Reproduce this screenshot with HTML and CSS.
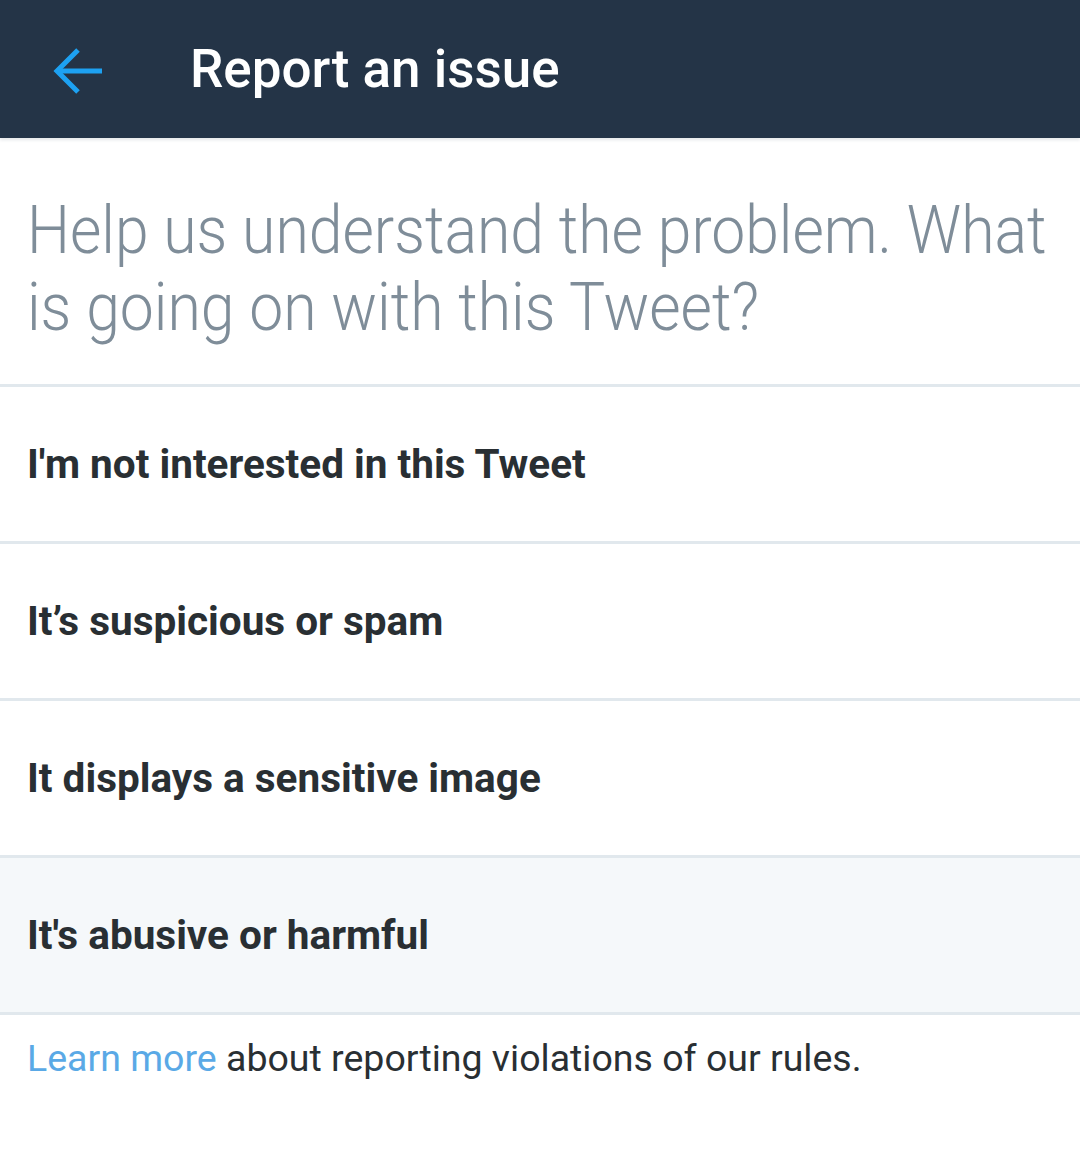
FILE: index.html
```html
<!DOCTYPE html>
<html>
<head>
<meta charset="utf-8">
<link rel="stylesheet" href="styles.css">
</head>
<body>
<header class="topbar">
  <div class="back">
    <svg width="52" height="52" viewBox="0 0 52 52" fill="none" stroke="#1da1f2" stroke-width="5" stroke-linecap="butt" stroke-linejoin="miter">
      <path d="M50 26 H6"/>
      <path d="M26 5 L5 26 L26 47"/>
    </svg>
  </div>
  <h1 class="title">Report an issue</h1>
</header>
<section class="question">
  <p class="question-text">Help us understand the problem. What is going on with this Tweet?</p>
</section>
<ul class="options">
  <li class="option">I'm not interested in this Tweet</li>
  <li class="option">It’s suspicious or spam</li>
  <li class="option">It displays a sensitive image</li>
  <li class="option option-active">It's abusive or harmful</li>
</ul>
<footer class="footer">
  <a class="link" href="#">Learn more</a> about reporting violations of our rules.
</footer>
</body>
</html>
```
FILE: styles.css
```css
* { box-sizing: border-box; }
html, body { margin: 0; padding: 0; background: #ffffff; }
body {
  font-family: Roboto, "Noto Sans", sans-serif;
  width: 1080px;
  height: 1175px;
  overflow: hidden;
}
.topbar {
  height: 138px;
  background: #243447;
  display: flex;
  align-items: center;
  padding-left: 52px;
  box-shadow: 0 2px 3px rgba(36, 52, 71, 0.12);
  position: relative;
}
.back {
  width: 52px;
  height: 52px;
  display: flex;
  margin-top: 4px;
}
.title {
  margin: 0 0 0 86px;
  color: #ffffff;
  font-weight: 500;
  font-size: 53px;
  line-height: 1;
  margin-top: 0;
}
.question {
  padding: 54px 0 38px 27px;
  overflow: hidden;
}
.question-text {
  margin: 0;
  width: 1140px;
  font-weight: 300;
  font-size: 67px;
  line-height: 77px;
  color: #7f8d99;
  transform: scaleX(0.905);
  transform-origin: left top;
}
.options {
  list-style: none;
  margin: 0;
  padding: 0;
  border-top: 3px solid #e1e8ed;
}
.option {
  height: 157px;
  border-bottom: 3px solid #e1e8ed;
  display: flex;
  align-items: center;
  padding-left: 27px;
  font-weight: 700;
  font-size: 40.5px;
  color: #292f33;
}
.option-active {
  background: #f5f8fa;
}
.footer {
  padding: 18px 27px;
  font-size: 37.5px;
  line-height: 50px;
  color: #292f33;
}
.link {
  color: #5aa9e6;
  text-decoration: none;
}
```
